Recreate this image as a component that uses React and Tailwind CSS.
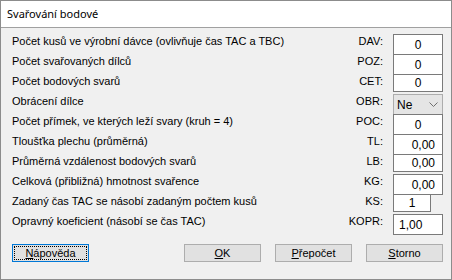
import React from 'react';

const rows = [
    { label: 'Počet kusů ve výrobní dávce (ovlivňuje čas TAC a TBC)', code: 'DAV', value: '0', align: 'center', h: 'h-[21px]' },
    { label: 'Počet svařovaných dílců', code: 'POZ', value: '0', align: 'center', h: 'h-[21px]' },
    { label: 'Počet bodových svarů', code: 'CET', value: '0', align: 'center', h: 'h-[18px]' },
    { label: 'Obrácení dílce', code: 'OBR', combo: 'Ne' },
    { label: 'Počet přímek, ve kterých leží svary (kruh = 4)', code: 'POC', value: '0', align: 'center', h: 'h-[21px]' },
    { label: 'Tloušťka plechu (průměrná)', code: 'TL', value: '0,00', align: 'right', h: 'h-[21px]' },
    { label: 'Průměrná vzdálenost bodových svarů', code: 'LB', value: '0,00', align: 'right', h: 'h-[18px]' },
    { label: 'Celková (přibližná) hmotnost svařence', code: 'KG', value: '0,00', align: 'right', h: 'h-[21px]' },
    { label: 'Zadaný čas TAC se násobí zadaným počtem kusů', code: 'KS', value: '1', align: 'center', h: 'h-[18px]', narrow: true },
    { label: 'Opravný koeficient (násobí se čas TAC)', code: 'KOPR', value: '1,00', align: 'left', h: 'h-[21px]' },
];

const alignClass = {
    center: 'justify-center',
    right: 'justify-end pr-[7px]',
    left: 'justify-start pl-[5px]',
};

function Field({ row }) {
    if (row.combo) {
        return (
            <div className="w-[50px] h-[21px] shrink-0 bg-[#e5e5e5] border border-[#adadad] flex items-center pl-[3px] pr-[4px] text-[12px]">
                <span className="flex-1">{row.combo}</span>
                <svg width="9" height="5" viewBox="0 0 9 5">
                    <polyline points="0.5,0.5 4.5,4.5 8.5,0.5" fill="none" stroke="#707070" strokeWidth="1" />
                </svg>
            </div>
        );
    }
    return (
        <div className={`${row.narrow ? 'w-[38px]' : 'w-[50px]'} ${row.h} shrink-0 bg-white border border-[#7a7a7a] flex items-center text-[12px] ${alignClass[row.align]}`}>
            {row.value}
        </div>
    );
}

function Btn({ children, focused }) {
    return (
        <button
            className={`w-[77px] h-[18px] bg-[#e1e1e1] border p-[1px] text-[11px] leading-[12px] flex items-stretch ${focused ? 'border-[#0078d7]' : 'border-[#adadad]'}`}
        >
            <span className={`flex-1 flex items-center justify-center border ${focused ? 'border-dotted border-black' : 'border-transparent'}`}>
                {children}
            </span>
        </button>
    );
}

export default function App() {
    return (
        <div
            className="w-[452px] h-[280px] border border-[#8c8c8c] bg-[#f0f0f0] flex flex-col text-black"
            style={{ fontFamily: '"Liberation Sans", Arial, sans-serif' }}
        >
            <div
                className="h-[27px] shrink-0 bg-white border-b border-[#a0a0a0] flex items-center pl-[6px] text-[11px]"
                style={{ fontFamily: '"Noto Sans", sans-serif' }}
            >
                Svařování bodové
            </div>
            <div className="flex-1 pt-[6px] pl-[11px] pr-[8px] text-[11px]">
                {rows.map((row) => (
                    <div key={row.code} className="flex h-[20px] items-start">
                        <div className="flex-1 pt-[1px] leading-[13px] whitespace-nowrap">{row.label}</div>
                        <div className="pt-[1px] leading-[13px] mr-[10px]">{row.code}:</div>
                        <div className="w-[50px] shrink-0">
                            <Field row={row} />
                        </div>
                    </div>
                ))}
                <div className="flex items-center mt-[10px]">
                    <Btn focused><span><u>N</u>ápověda</span></Btn>
                    <div className="flex-1" />
                    <div className="flex gap-[14px]">
                        <Btn><span><u>O</u>K</span></Btn>
                        <Btn><span><u>P</u>řepočet</span></Btn>
                        <Btn><span><u>S</u>torno</span></Btn>
                    </div>
                </div>
            </div>
        </div>
    );
}
